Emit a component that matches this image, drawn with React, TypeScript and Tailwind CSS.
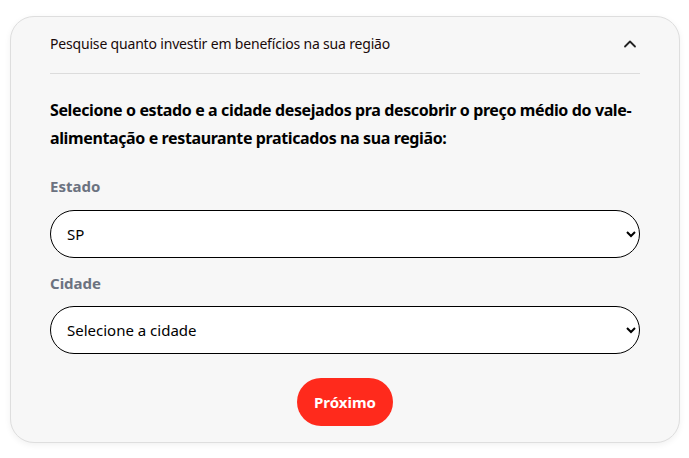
import React from 'react';

const font = { fontFamily: '"Noto Sans", "Open Sans", sans-serif' };

const App: React.FC = () => {
  return (
    <div className="min-h-screen bg-white px-[10px] pt-[16px]" style={font}>
      <div className="w-[670px] rounded-[24px] border border-[#dedede] bg-[#f7f7f7] px-[39px] pb-[16px] shadow-[0_2px_6px_rgba(0,0,0,0.06)]">
        <div className="flex h-[57px] items-center justify-between border-b border-[#dcdcdc] pb-[3px]">
          <span className="text-[14px] tracking-[-0.18px] text-[#1a0a0a]">Pesquise quanto investir em benefícios na sua região</span>
          <svg className="mr-[2px] h-[16px] w-[16px]" viewBox="0 0 16 16" fill="none" stroke="#222" strokeWidth="1.8" strokeLinecap="round" strokeLinejoin="round">
            <path d="M3 10.5 8 5.5l5 5" />
          </svg>
        </div>
        <p className="mt-[22px] pr-[4px] text-[16px] font-bold leading-[28px] tracking-[-0.38px] text-black">
          Selecione o estado e a cidade desejados pra descobrir o preço médio do vale-alimentação e restaurante praticados na sua região:
        </p>
        <label className="mt-[23px] block text-[15px] font-bold text-[#6b7280]">Estado</label>
        <select defaultValue="SP" className="mt-[12px] block h-[48px] w-full rounded-full border border-black bg-white px-[12px] text-[15px] text-black">
          <option value="SP">SP</option>
          <option value="RJ">RJ</option>
        </select>
        <label className="mt-[14px] block text-[15px] font-bold text-[#6b7280]">Cidade</label>
        <select defaultValue="" className="mt-[12px] block h-[48px] w-full rounded-full border border-black bg-white px-[12px] text-[15px] text-black">
          <option value="">Selecione a cidade</option>
          <option value="sp">São Paulo</option>
        </select>
        <div className="mt-[24px] flex justify-center">
          <button className="h-[48px] w-[96px] rounded-full bg-[#ff2a1c] text-[15px] font-bold text-white">Próximo</button>
        </div>
      </div>
    </div>
  );
};

export default App;
